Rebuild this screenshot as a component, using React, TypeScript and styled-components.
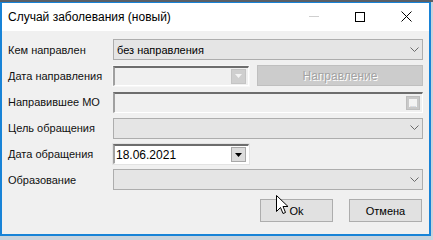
import React from "react";
import styled, { createGlobalStyle } from "styled-components";

const GlobalStyle = createGlobalStyle`
  html, body {
    margin: 0;
    padding: 0;
    width: 433px;
    height: 240px;
    overflow: hidden;
    background: #3c3f44;
    font-family: "Segoe UI", "Liberation Sans", "DejaVu Sans", sans-serif;
  }
`;

const Desk = styled.div`
  position: relative;
  width: 433px;
  height: 240px;
  padding-top: 2px;
  box-sizing: border-box;
  background: linear-gradient(#5b5f66 0 2px, #c9d3dc 2px);
`;

const Window = styled.div`
  width: 431px;
  height: 234px;
  box-sizing: border-box;
  border: 1px solid #1883d7;
  border-width: 1px 2px 2px 2px;
  background: #f0f0f0;
  display: flex;
  flex-direction: column;
`;

const TitleBar = styled.div`
  height: 28px;
  background: #ffffff;
  display: flex;
  align-items: center;
  padding-left: 6px;
  padding-bottom: 1px;
  box-sizing: border-box;
`;

const Title = styled.div`
  flex: 1;
  font-size: 12px;
  color: #000;
  white-space: nowrap;
`;

const Controls = styled.div`
  display: flex;
  align-items: center;
  height: 100%;
`;

const Ctl = styled.div`
  width: 46px;
  height: 100%;
  display: flex;
  align-items: center;
  justify-content: center;
`;

const Body = styled.div`
  flex: 1;
  padding: 8px 6px 0 5px;
  display: flex;
  flex-direction: column;
`;

const Form = styled.div`
  display: grid;
  grid-template-columns: 106px 1fr;
  row-gap: 5.3px;
  align-items: center;
`;

const Label = styled.div`
  font-size: 11px;
  color: #111;
  padding-left: 1px;
  white-space: nowrap;
`;

const Combo = styled.div`
  height: 21px;
  box-sizing: border-box;
  border: 1px solid #adadad;
  background: #e5e5e5;
  display: flex;
  align-items: center;
  padding-left: 3px;
  font-size: 11px;
  color: #000;
`;

const ComboText = styled.div`
  flex: 1;
`;

const Chevron = styled.div`
  width: 16px;
  display: flex;
  justify-content: center;
`;

const DateRow = styled.div`
  display: flex;
  gap: 8px;
  align-items: center;
`;

const DateBox = styled.div<{ $enabled?: boolean }>`
  width: 136px;
  height: 20px;
  box-sizing: border-box;
  border-top: 2px solid #6d6d6d;
  border-left: 2px solid #a0a0a0;
  border-right: 1px solid #ffffff;
  border-bottom: 1px solid #ffffff;
  outline: 1px solid ${(p) => (p.$enabled ? "#e3e3e3" : "#f7f7f7")};
  background: ${(p) => (p.$enabled ? "#ffffff" : "#f0f0f0")};
  display: flex;
  align-items: center;
  font-size: 12px;
  color: #000;
  padding-left: 1px;
`;

const DateText = styled.div`
  flex: 1;
`;

const DropBtn = styled.div<{ $enabled?: boolean }>`
  width: 13px;
  height: 13px;
  margin-right: 2px;
  background: ${(p) => (p.$enabled ? "#dcdcdc" : "#cfcfcf")};
  border: 1px solid ${(p) => (p.$enabled ? "#a8a8a8" : "#c4c4c4")};
  display: flex;
  align-items: center;
  justify-content: center;
`;

const FlatButton = styled.div<{ $disabled?: boolean }>`
  height: 21px;
  box-sizing: border-box;
  border: 1px solid ${(p) => (p.$disabled ? "#bfbfbf" : "#adadad")};
  background: ${(p) => (p.$disabled ? "#cccccc" : "#e1e1e1")};
  display: flex;
  align-items: center;
  justify-content: center;
  font-size: 11px;
  color: ${(p) => (p.$disabled ? "#a3a3a3" : "#000")};
  text-shadow: ${(p) => (p.$disabled ? "1px 1px 0 #ffffff" : "none")};
`;

const WideButton = styled(FlatButton)`
  flex: 1;
  font-size: 12px;
`;

const TextBox = styled.div`
  height: 21px;
  box-sizing: border-box;
  border-top: 2px solid #6d6d6d;
  border-left: 2px solid #a0a0a0;
  border-right: 1px solid #ffffff;
  border-bottom: 1px solid #ffffff;
  background: #f0f0f0;
  display: flex;
  align-items: center;
  justify-content: flex-end;
  padding-right: 2px;
`;

const DotsBtn = styled.div`
  width: 12px;
  height: 12px;
  border: 1px solid #bdbdbd;
  background: #c9c9c9;
  display: flex;
  align-items: center;
  justify-content: center;
`;

const DotsInner = styled.div`
  width: 8px;
  height: 8px;
  background: #f3f3f3;
  display: flex;
  align-items: flex-end;
  justify-content: center;
  font-size: 7px;
  line-height: 5px;
  color: #9aa6b5;
  letter-spacing: 0;
`;

const Footer = styled.div`
  display: flex;
  justify-content: flex-end;
  gap: 16px;
  margin-top: 9px;
  padding-right: 1px;
`;

const DlgButton = styled(FlatButton)`
  width: 73px;
  height: 23px;
`;

const Cursor = styled.svg`
  position: absolute;
  left: 276px;
  top: 195px;
`;

const ChevronIcon = () => (
  <svg width="9" height="6" viewBox="0 0 9 6">
    <path d="M0.5 0.5 L4.5 4.5 L8.5 0.5" fill="none" stroke="#6a6a6a" strokeWidth="1" />
  </svg>
);

const Arrow = ({ enabled }: { enabled?: boolean }) => (
  <svg width="7" height="4" viewBox="0 0 7 4">
    <path d="M0 0 H7 L3.5 4 Z" fill={enabled ? "#000" : "#f4f4f4"} />
  </svg>
);

const App = () => {
  return (
    <>
      <GlobalStyle />
      <Desk>
        <Window>
          <TitleBar>
            <Title>Случай заболевания (новый)</Title>
            <Controls>
              <Ctl>
                <svg width="10" height="1">
                  <rect width="10" height="1" fill="#cfcfcf" />
                </svg>
              </Ctl>
              <Ctl>
                <svg width="10" height="10">
                  <rect x="0.5" y="0.5" width="9" height="9" fill="none" stroke="#000" />
                </svg>
              </Ctl>
              <Ctl>
                <svg width="11" height="11">
                  <path d="M0.5 0.5 L10.5 10.5 M10.5 0.5 L0.5 10.5" stroke="#000" strokeWidth="1" />
                </svg>
              </Ctl>
            </Controls>
          </TitleBar>
          <Body>
            <Form>
              <Label>Кем направлен</Label>
              <Combo>
                <ComboText>без направления</ComboText>
                <Chevron>
                  <ChevronIcon />
                </Chevron>
              </Combo>

              <Label>Дата направления</Label>
              <DateRow>
                <DateBox>
                  <DateText />
                  <DropBtn>
                    <Arrow />
                  </DropBtn>
                </DateBox>
                <WideButton $disabled>Направление</WideButton>
              </DateRow>

              <Label>Направившее МО</Label>
              <TextBox>
                <DotsBtn>
                  <DotsInner>...</DotsInner>
                </DotsBtn>
              </TextBox>

              <Label>Цель обращения</Label>
              <Combo>
                <ComboText />
                <Chevron>
                  <ChevronIcon />
                </Chevron>
              </Combo>

              <Label>Дата обращения</Label>
              <DateRow>
                <DateBox $enabled>
                  <DateText>18.06.2021</DateText>
                  <DropBtn $enabled>
                    <Arrow enabled />
                  </DropBtn>
                </DateBox>
              </DateRow>

              <Label>Образование</Label>
              <Combo>
                <ComboText />
                <Chevron>
                  <ChevronIcon />
                </Chevron>
              </Combo>
            </Form>
            <Footer>
              <DlgButton>Ok</DlgButton>
              <DlgButton>Отмена</DlgButton>
            </Footer>
          </Body>
        </Window>
        <Cursor width="13" height="21" viewBox="0 0 13 21">
          <path
            d="M0.5 0.5 L0.5 16.5 L4.5 12.5 L7 18.5 L9.5 17.5 L7 11.5 L12 11.5 Z"
            fill="#fff"
            stroke="#000"
            strokeWidth="1"
            strokeLinejoin="round"
          />
        </Cursor>
      </Desk>
    </>
  );
};

export default App;
